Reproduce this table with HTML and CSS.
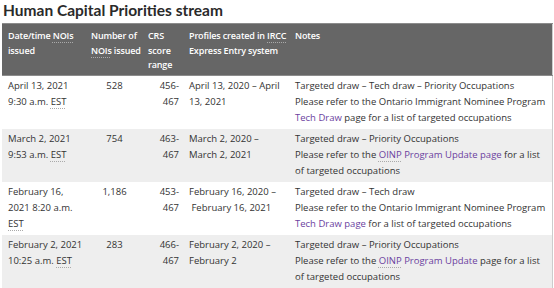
FILE: index.html
```html
<!DOCTYPE html>
<html lang="en">
<head>
<meta charset="utf-8">
<title>Human Capital Priorities stream</title>
<link rel="stylesheet" href="styles.css">
</head>
<body>
<div class="page">
  <h2 class="title">Human Capital Priorities stream</h2>
  <table class="draws">
    <colgroup>
      <col class="c-date"><col class="c-num"><col class="c-crs"><col class="c-prof"><col class="c-notes">
    </colgroup>
    <thead>
      <tr>
        <th>Date/time <abbr>NOIs</abbr><br>issued</th>
        <th>Number of<br><abbr>NOIs</abbr> issued</th>
        <th>CRS<br>score<br>range</th>
        <th>Profiles created in <abbr>IRCC</abbr><br>Express Entry system</th>
        <th>Notes</th>
      </tr>
    </thead>
    <tbody>
      <tr>
        <td>April 13, 2021<br>9:30 a.m. <abbr>EST</abbr></td>
        <td class="num">528</td>
        <td class="crs">456-<br>467</td>
        <td>April 13, 2020 – April 13, 2021</td>
        <td>Targeted draw – Tech draw – Priority Occupations<br>Please refer to the Ontario Immigrant Nominee Program <a href="#">Tech Draw</a> page for a list of targeted occupations</td>
      </tr>
      <tr class="alt">
        <td>March 2, 2021<br>9:53 a.m. <abbr>EST</abbr></td>
        <td class="num">754</td>
        <td class="crs">463-<br>467</td>
        <td>March 2, 2020 –<br>March 2, 2021</td>
        <td>Targeted draw – Priority Occupations<br>Please refer to the <a href="#"><abbr>OINP</abbr> Program Update page</a> for a list of targeted occupations</td>
      </tr>
      <tr>
        <td>February 16, 2021 8:20 a.m. <abbr>EST</abbr></td>
        <td class="num">1,186</td>
        <td class="crs">453-<br>467</td>
        <td>February 16, 2020 –<br>&nbsp;February 16, 2021</td>
        <td>Targeted draw – Tech draw<br>Please refer to the Ontario Immigrant Nominee Program <a href="#">Tech Draw page</a> for a list of targeted occupations</td>
      </tr>
      <tr class="alt">
        <td><span class="nowrap">February 2, 2021</span><br>10:25 a.m. <abbr>EST</abbr></td>
        <td class="num">283</td>
        <td class="crs">466-<br>467</td>
        <td>February 2, 2020 –<br>February 2</td>
        <td>Targeted draw – Priority Occupations<br>Please refer to the <a href="#"><abbr>OINP</abbr> Program Update</a> page for a list of targeted occupations</td>
      </tr>
    </tbody>
  </table>
</div>
</body>
</html>
```

FILE: styles.css
```css
html, body {
  margin: 0;
  padding: 0;
  background: #fff;
}
.page {
  padding: 0 2px;
  font-family: "Open Sans", "Liberation Sans", sans-serif;
  color: #333;
}
.title {
  margin: 0;
  height: 23px;
  font-family: Lato, "Open Sans", sans-serif;
  font-weight: 700;
  font-size: 15.5px;
  line-height: 20px;
  color: #2a2a2a;
  padding-left: 1px;
}
.draws {
  width: 550px;
  border-collapse: collapse;
  table-layout: fixed;
  font-size: 9.5px;
  border-right: 1px solid #ccc;
}
.c-date { width: 83px; }
.c-num { width: 57px; }
.c-crs { width: 41px; }
.c-prof { width: 106px; }
.c-notes { width: 263px; }
.draws th {
  background: #666;
  color: #fff;
  font-weight: 600;
  font-size: 9px;
  letter-spacing: -0.15px;
  white-space: nowrap;
  text-align: left;
  vertical-align: top;
  line-height: 14.5px;
  padding: 5px 0 2px 6px;
  border-top: 1px solid #8c8c8c;
  border-bottom: 1px solid #8c8c8c;
}
.draws td {
  vertical-align: top;
  line-height: 16px;
  padding: 2px 4px 3px 6px;
  height: 48px;
}
.draws tr.alt td {
  background: #eee;
}
.draws td.num {
  text-align: center;
}
.draws td.crs {
  text-align: right;
}
.nowrap {
  white-space: nowrap;
}
abbr {
  text-decoration: underline dotted #aaa;
  text-underline-offset: 3px;
}
a {
  color: #6b3fa0;
  text-decoration: none;
}
```
